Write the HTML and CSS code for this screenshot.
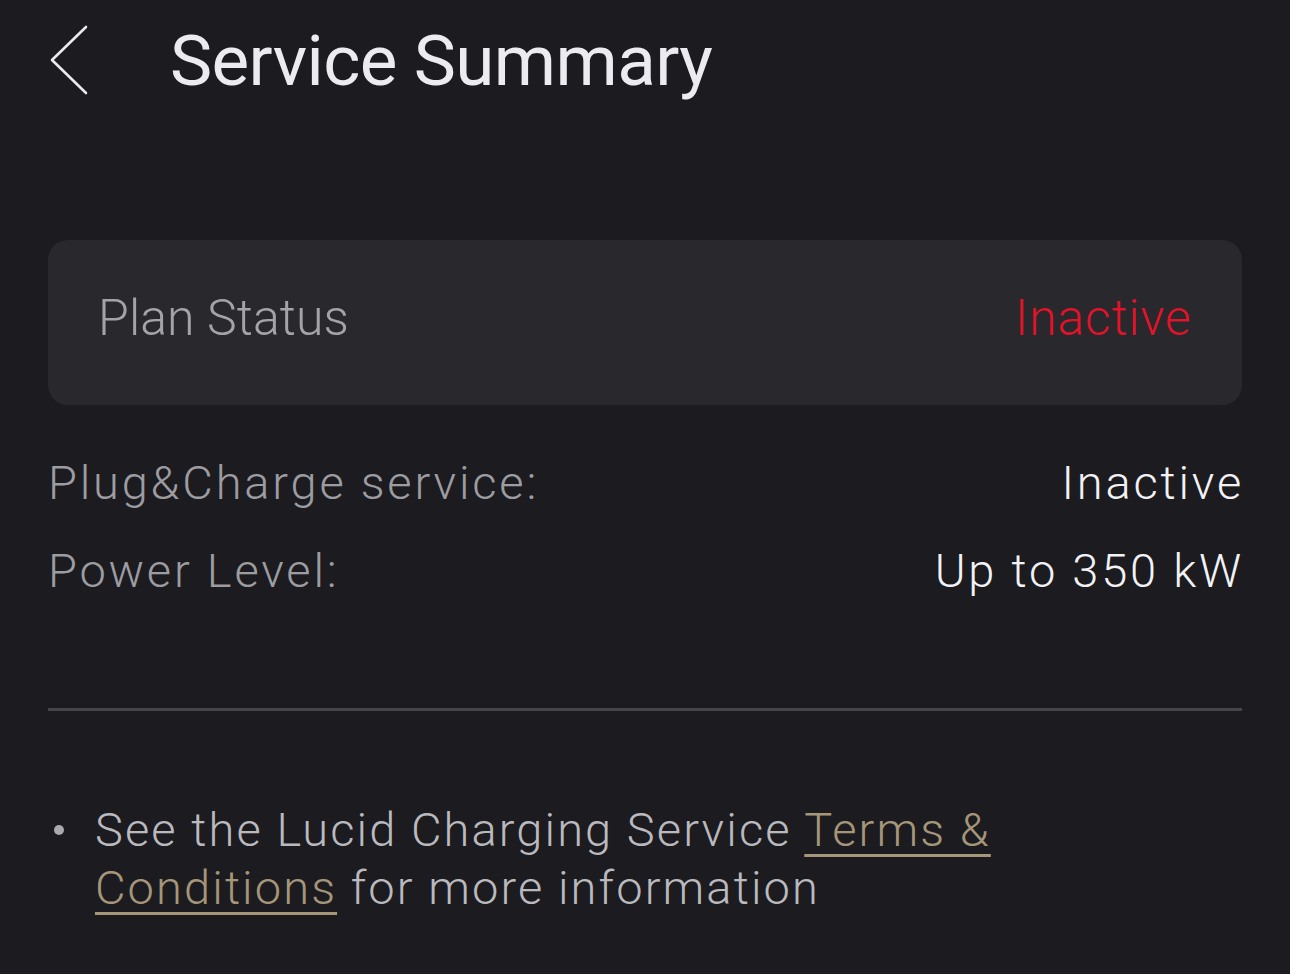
FILE: index.html
```html
<!DOCTYPE html>
<html>
<head>
<meta charset="utf-8">
<link rel="stylesheet" href="styles.css">
</head>
<body>
<div class="page">
  <header class="topbar">
    <button class="back" aria-label="Back">
      <svg width="40" height="70" viewBox="0 0 40 70"><path d="M37 2 L3 35 L37 68" fill="none" stroke="#e9e9ee" stroke-width="2.6" stroke-linecap="round" stroke-linejoin="round"/></svg>
    </button>
    <h1 class="title">Service Summary</h1>
  </header>

  <section class="card">
    <span class="card-label">Plan Status</span>
    <span class="card-value">Inactive</span>
  </section>

  <section class="details">
    <div class="row"><span class="label">Plug&amp;Charge service:</span><span class="value">Inactive</span></div>
    <div class="row"><span class="label">Power Level:</span><span class="value">Up to 350 kW</span></div>
  </section>

  <hr class="divider">

  <ul class="notes">
    <li><span class="dot"></span><span class="note-text">See the Lucid Charging Service <a href="#">Terms &amp; Conditions</a> for more information</span></li>
  </ul>
</div>
</body>
</html>
```

FILE: styles.css
```css
* { box-sizing: border-box; }
html, body { margin: 0; padding: 0; }
body {
  background: #1b1b20;
  font-family: Roboto, "Liberation Sans", sans-serif;
  font-weight: 300;
  width: 1290px;
  height: 974px;
  overflow: hidden;
}
.page {
  padding: 0 48px;
}
.topbar {
  display: flex;
  align-items: center;
  height: 120px;
}
.back {
  background: none;
  border: 0;
  padding: 0;
  width: 122px;
  display: flex;
  align-items: center;
  cursor: pointer;
}
.back svg { display: block; margin-left: 1px; }
.title {
  margin: 0;
  color: #ececf0;
  font-weight: 400;
  font-size: 71px;
  letter-spacing: -0.6px;
  line-height: 1;
}
.card {
  margin-top: 120px;
  height: 165px;
  background: #28282d;
  border-radius: 20px;
  display: flex;
  align-items: center;
  justify-content: space-between;
  padding: 0 50px 10px;
  font-size: 50px;
  letter-spacing: 0.1px;
}
.card-label { color: #a3a3a8; }
.card-value { color: #e3132a; letter-spacing: 0.8px; }
.details {
  margin-top: 48px;
  display: flex;
  flex-direction: column;
  gap: 28px;
}
.row {
  display: flex;
  justify-content: space-between;
  font-size: 47px;
  line-height: 60px;
  letter-spacing: 2.8px;
}
.row .label { color: #9c9ca1; }
.row .value { color: #f2f2f5; margin-right: -2px; }
.divider {
  border: 0;
  height: 3px;
  background: #45454b;
  margin: 107px 0 0;
}
.notes {
  list-style: none;
  margin: 90px 0 0;
  padding: 0;
  color: #b9b9be;
  font-size: 47px;
  line-height: 58px;
  letter-spacing: 2.1px;
}
.notes li {
  display: flex;
  align-items: flex-start;
}
.dot {
  flex: none;
  width: 10px;
  height: 10px;
  border-radius: 50%;
  background: #a9a9ae;
  margin: 24px 31px 0 6px;
}
.note-text { flex: 1; }
.notes a {
  color: #a59679;
  text-decoration: underline;
  text-decoration-thickness: 3px;
  text-underline-offset: 8px;
}
```
